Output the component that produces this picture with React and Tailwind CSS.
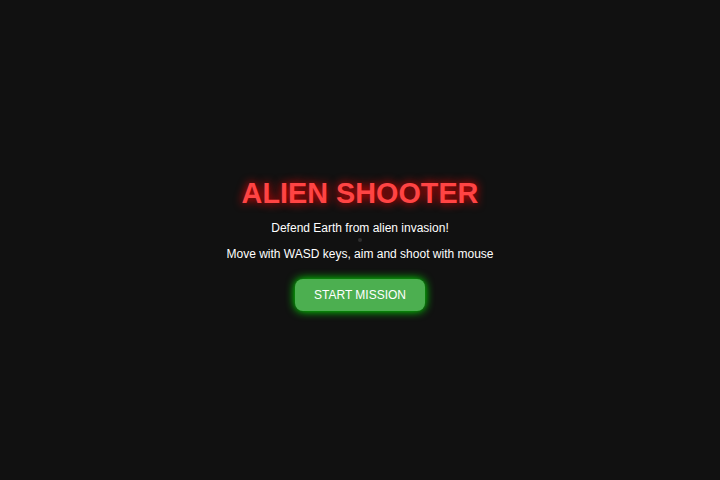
export default function App() {
  return (
    <div className="relative w-full h-screen bg-[#111111] flex items-center justify-center overflow-hidden" style={{ fontFamily: '"Liberation Sans", Arial, sans-serif' }}>
      <div className="absolute left-[358px] top-[238px] w-[4px] h-[4px] rounded-full bg-[#2e2e2e]" />
      <div className="relative flex flex-col items-center pt-[8px] text-[12px] text-white">
        <h1 className="text-[28.8px] font-bold leading-[33px] text-[#ff4444] [text-shadow:0_0_10px_#ff0000]">ALIEN SHOOTER</h1>
        <p className="mt-[11px] text-[12px] leading-[14px]">Defend Earth from alien invasion!</p>
        <p className="mt-[12px] text-[12px] leading-[14px]">Move with WASD keys, aim and shoot with mouse</p>
        <button className="mt-[18px] w-[130px] h-[32px] rounded-[8px] bg-[#4caf50] text-[12px] text-white shadow-[0_0_10px_#00ff00]">START MISSION</button>
      </div>
    </div>
  );
}
